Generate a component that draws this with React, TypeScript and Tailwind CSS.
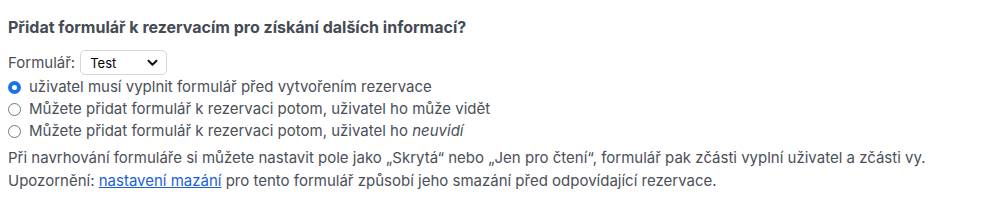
import React from "react";

function Radio({ checked }: { checked?: boolean }) {
  return checked ? (
    <span className="inline-flex h-[13px] w-[13px] shrink-0 items-center justify-center rounded-full bg-[#1a73e8]">
      <span className="h-[5px] w-[5px] rounded-full bg-white" />
    </span>
  ) : (
    <span className="inline-block h-[13px] w-[13px] shrink-0 rounded-full border border-[#767676] bg-white" />
  );
}

export default function App() {
  return (
    <div className="bg-white h-[206px] w-[984px] px-2 pt-[16px] text-[15px] leading-[22px] text-[#4b5058] font-['Inter','Liberation_Sans',sans-serif]">
      <div className="font-bold text-[16px] leading-[22px] text-[#454b53]">
        Přidat formulář k rezervacím pro získání dalších informací?
      </div>
      <div className="mt-[12px] mb-[1px] flex items-center gap-[5px]">
        <span>Formulář:</span>
        <span className="flex h-[25px] w-[87px] items-center justify-between rounded-[5px] border border-[#d4d6da] bg-white pl-[9px] pr-[8px] text-[13px] text-black">
          <span>Test</span>
          <svg width="11" height="8" viewBox="0 0 11 8" fill="none">
            <path d="M1.5 1.8 L5.5 5.8 L9.5 1.8" stroke="#111" strokeWidth="2" strokeLinecap="round" strokeLinejoin="round" />
          </svg>
        </span>
      </div>
      <div className="flex h-[22px] items-center gap-[8px]">
        <Radio checked />
        <span>uživatel musí vyplnit formulář před vytvořením rezervace</span>
      </div>
      <div className="flex h-[22px] items-center gap-[8px]">
        <Radio />
        <span>Můžete přidat formulář k rezervaci potom, uživatel ho může vidět</span>
      </div>
      <div className="flex h-[22px] items-center gap-[8px]">
        <Radio />
        <span>
          Můžete přidat formulář k rezervaci potom, uživatel ho <i>neuvidí</i>
        </span>
      </div>
      <div className="mt-[4px] leading-[23px]">
        Při navrhování formuláře si můžete nastavit pole jako „Skrytá“ nebo „Jen pro čtení“, formulář pak zčásti vyplní uživatel a zčásti vy.
      </div>
      <div className="leading-[23px]">
        Upozornění:{" "}
        <a className="text-[#1a5fd6] underline" href="#">
          nastavení mazání
        </a>{" "}
        pro tento formulář způsobí jeho smazání před odpovídající rezervace.
      </div>
    </div>
  );
}
